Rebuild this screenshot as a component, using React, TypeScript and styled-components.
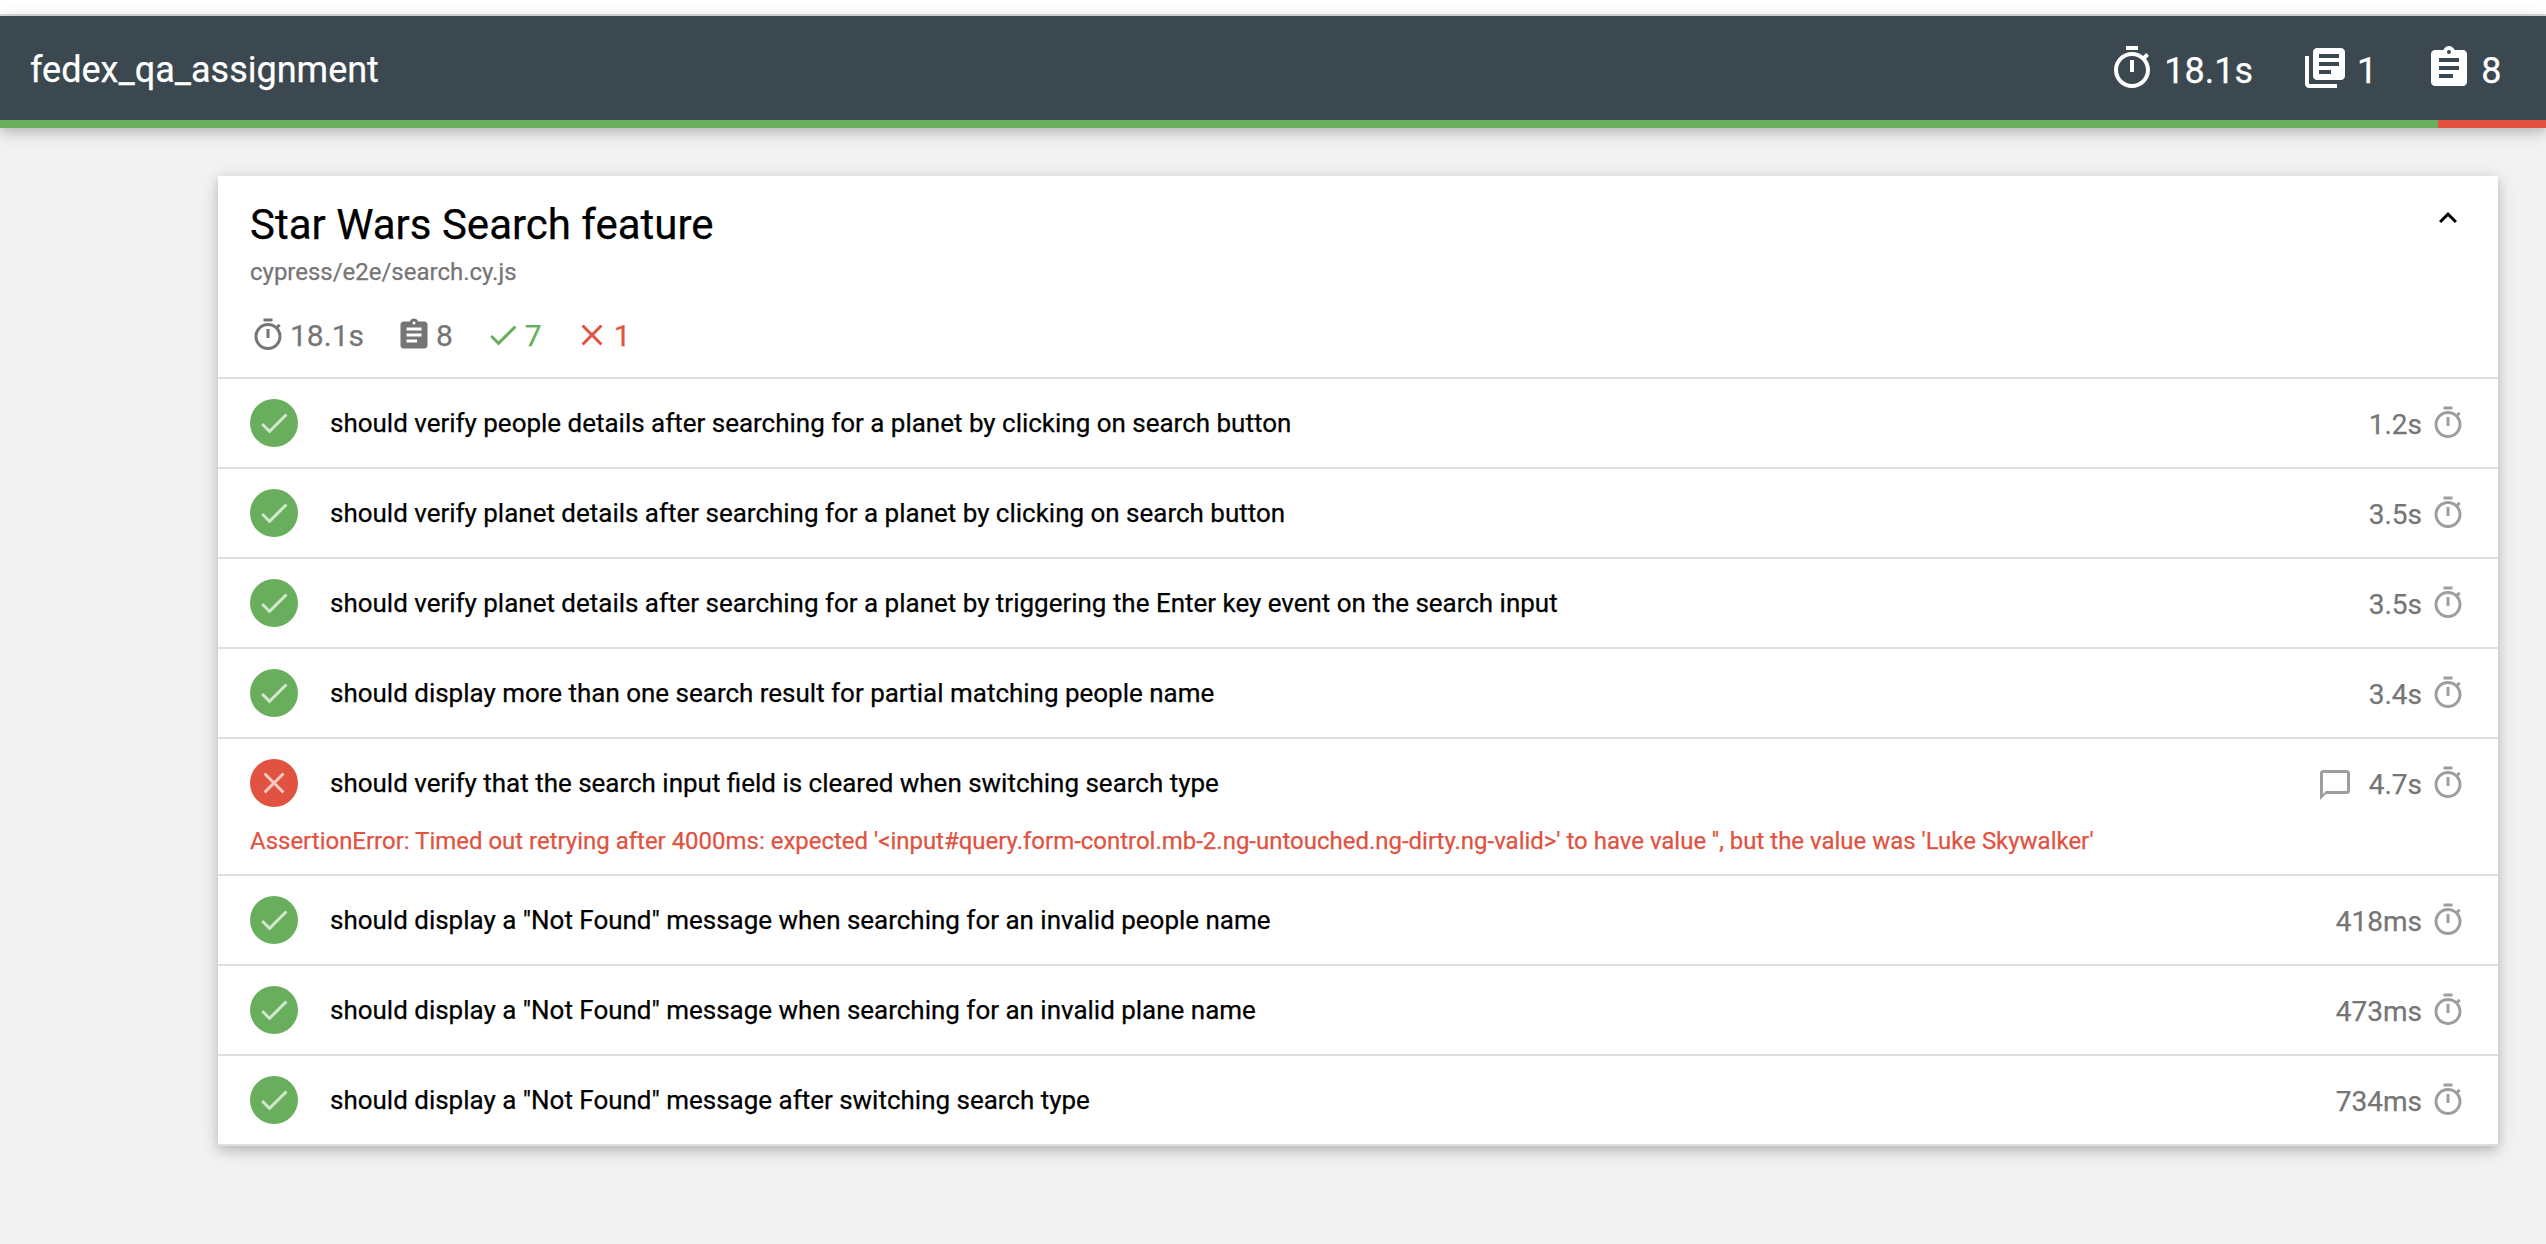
import React from "react";
import styled, { createGlobalStyle, css } from "styled-components";

const GREEN = "#68ae5d";
const RED = "#e15241";
const GREY = "#757575";

const GlobalStyle = createGlobalStyle`
  *, *::before, *::after { box-sizing: border-box; }
  html, body { margin: 0; padding: 0; }
  body {
    background: #f2f2f2;
    color: #000;
    font-family: Roboto, "Liberation Sans", sans-serif;
    -webkit-text-stroke: 0.25px currentColor;
    overflow: hidden;
  }
  h1, h2, h3, p, ul { margin: 0; padding: 0; font-weight: 400; }
`;

const paths = {
  timer:
    "M15 1H9v2h6V1zm-4 13h2V8h-2v6zm8.03-6.61l1.42-1.42c-.43-.51-.9-.99-1.41-1.41l-1.42 1.42C16.07 4.74 14.12 4 12 4c-4.97 0-9 4.03-9 9s4.02 9 9 9 9-4.03 9-9c0-2.12-.74-4.07-1.97-5.61zM12 20c-3.87 0-7-3.13-7-7s3.13-7 7-7 7 3.13 7 7-3.13 7-7 7z",
  library:
    "M4 6H2v14c0 1.1.9 2 2 2h14v-2H4V6zm16-4H8c-1.1 0-2 .9-2 2v12c0 1.1.9 2 2 2h12c1.1 0 2-.9 2-2V4c0-1.1-.9-2-2-2zm-1 9H9V9h10v2zm-4 4H9v-2h6v2zm4-8H9V5h10v2z",
  assignment:
    "M19 3h-4.18C14.4 1.84 13.3 1 12 1c-1.3 0-2.4.84-2.82 2H5c-1.1 0-2 .9-2 2v14c0 1.1.9 2 2 2h14c1.1 0 2-.9 2-2V5c0-1.1-.9-2-2-2zm-7 0c.55 0 1 .45 1 1s-.45 1-1 1-1-.45-1-1 .45-1 1-1zm2 14H7v-2h7v2zm3-4H7v-2h10v2zm0-4H7V7h10v2z",
  check: "M9 16.17L4.83 12l-1.42 1.41L9 19 21 7l-1.41-1.41z",
  close:
    "M19 6.41L17.59 5 12 10.59 6.41 5 5 6.41 10.59 12 5 17.59 6.41 19 12 13.41 17.59 19 19 17.59 13.41 12z",
  chat: "M20 2H4c-1.1 0-2 .9-2 2v18l4-4h14c1.1 0 2-.9 2-2V4c0-1.1-.9-2-2-2zm0 14H6l-2 2V4h16v12z",
  expandLess: "M12 8l-6 6 1.41 1.41L12 10.83l4.59 4.58L18 14z",
};

type IconName = keyof typeof paths;

const Svg = styled.svg<{ $size: number }>`
  display: block;
  flex: none;
  width: ${(p) => p.$size}px;
  height: ${(p) => p.$size}px;
  fill: currentColor;
`;

const Icon = ({ name, size = 36 }: { name: IconName; size?: number }) => (
  <Svg $size={size} viewBox="0 0 24 24" aria-hidden="true">
    <path d={paths[name]} />
  </Svg>
);

const elevation = css`
  box-shadow: 0 4px 10px 0 rgba(0, 0, 0, 0.16), 0 4px 20px 0 rgba(0, 0, 0, 0.12);
`;

const Page = styled.div`
  height: 1244px;
  overflow: hidden;
`;

const BrowserEdge = styled.div`
  height: 16px;
  background: #fff;
  border-bottom: 2px solid #dadde0;
`;

const Navbar = styled.header`
  ${elevation}
  background: #3b484f;
  color: #fff;
`;

const NavContent = styled.div`
  display: flex;
  justify-content: space-between;
  height: 104px;
  padding: 28px 44.5px 0 30px;
`;

const ReportTitle = styled.h1`
  font-size: 36px;
  line-height: 52px;
`;

const NavStats = styled.ul`
  display: flex;
  gap: 48px;
  list-style: none;
`;

const NavStat = styled.li`
  display: flex;
  align-items: flex-start;
  gap: 8px;
  font-size: 36px;
  line-height: 54px;
`;

const RatioBar = styled.div`
  display: flex;
  height: 8px;
`;

const RatioPart = styled.div<{ $color: string; $width?: number }>`
  flex: ${(p) => (p.$width ? `0 0 ${p.$width}px` : "1")};
  background: ${(p) => p.$color};
`;

const Suite = styled.section`
  ${elevation}
  margin: 48px 48px 0 218px;
  background: #fff;
`;

const SuiteHeader = styled.header`
  display: flex;
  justify-content: space-between;
  height: 203px;
  padding: 24px 32px 0;
  border-bottom: 2px solid #dfdfdf;
`;

const SuiteTitle = styled.h2`
  font-size: 42px;
  line-height: 50px;
`;

const SuitePath = styled.p`
  margin-top: 8px;
  color: ${GREY};
  font-size: 23.98px;
  line-height: 28px;
`;

const SuiteStats = styled.ul`
  display: flex;
  gap: 32px;
  margin-top: 31px;
  list-style: none;
`;

const SuiteStat = styled.li<{ $color: string }>`
  display: flex;
  gap: 4px;
  color: ${(p) => p.$color};
  font-size: 30px;
  line-height: 37px;
`;

const TestRow = styled.li`
  display: block;
  padding: 20px 32px;
  border-bottom: 2px solid #dfdfdf;
`;

const TestMain = styled.div`
  display: flex;
  align-items: center;
  height: 48px;
`;

const StateBadge = styled.span<{ $failed: boolean }>`
  display: flex;
  align-items: center;
  justify-content: center;
  width: 48px;
  height: 48px;
  border-radius: 50%;
  background: ${(p) => (p.$failed ? RED : GREEN)};
  color: rgba(255, 255, 255, 0.7);
`;

const TestTitle = styled.h3`
  flex: 1;
  margin-left: 32px;
  font-size: 25.97px;
  line-height: 48px;
`;

const TestMeta = styled.div`
  display: flex;
  align-items: center;
  color: #9e9e9e;
`;

const ContextMark = styled.span`
  margin: 4px 16px 0 0;
`;

const Duration = styled.span`
  margin-right: 8px;
  padding-top: 3px;
  color: ${GREY};
  font-size: 28px;
  line-height: 45px;
`;

const ErrorText = styled.p`
  margin-top: 20px;
  height: 27px;
  color: ${RED};
  font-size: 23.98px;
  line-height: 28px;
  white-space: nowrap;
`;

type Test = { title: string; time: string; error?: string };

const tests: Test[] = [
  { title: "should verify people details after searching for a planet by clicking on search button", time: "1.2s" },
  { title: "should verify planet details after searching for a planet by clicking on search button", time: "3.5s" },
  {
    title: "should verify planet details after searching for a planet by triggering the Enter key event on the search input",
    time: "3.5s",
  },
  { title: "should display more than one search result for partial matching people name", time: "3.4s" },
  {
    title: "should verify that the search input field is cleared when switching search type",
    time: "4.7s",
    error:
      "AssertionError: Timed out retrying after 4000ms: expected '<input#query.form-control.mb-2.ng-untouched.ng-dirty.ng-valid>' to have value '', but the value was 'Luke Skywalker'",
  },
  { title: 'should display a "Not Found" message when searching for an invalid people name', time: "418ms" },
  { title: 'should display a "Not Found" message when searching for an invalid plane name', time: "473ms" },
  { title: 'should display a "Not Found" message after switching search type', time: "734ms" },
];

const navStats: { icon: IconName; value: string }[] = [
  { icon: "timer", value: "18.1s" },
  { icon: "library", value: "1" },
  { icon: "assignment", value: "8" },
];

const suiteStats: { icon: IconName; value: string; color: string }[] = [
  { icon: "timer", value: "18.1s", color: GREY },
  { icon: "assignment", value: "8", color: GREY },
  { icon: "check", value: "7", color: GREEN },
  { icon: "close", value: "1", color: RED },
];

const List = styled.ul`
  list-style: none;
`;

export default function App() {
  return (
    <Page>
      <GlobalStyle />
      <BrowserEdge />
      <Navbar>
        <NavContent>
          <ReportTitle>fedex_qa_assignment</ReportTitle>
          <NavStats>
            {navStats.map((s) => (
              <NavStat key={s.icon}>
                <Icon name={s.icon} size={48} />
                <span>{s.value}</span>
              </NavStat>
            ))}
          </NavStats>
        </NavContent>
        <RatioBar>
          <RatioPart $color={GREEN} $width={2438} />
          <RatioPart $color={RED} />
        </RatioBar>
      </Navbar>
      <Suite>
        <SuiteHeader>
          <div>
            <SuiteTitle>Star Wars Search feature</SuiteTitle>
            <SuitePath>cypress/e2e/search.cy.js</SuitePath>
            <SuiteStats>
              {suiteStats.map((s) => (
                <SuiteStat key={s.icon} $color={s.color}>
                  <Icon name={s.icon} />
                  <span>{s.value}</span>
                </SuiteStat>
              ))}
            </SuiteStats>
          </div>
          <Icon name="expandLess" />
        </SuiteHeader>
        <List>
          {tests.map((t) => (
            <TestRow key={t.title}>
              <TestMain>
                <StateBadge $failed={!!t.error}>
                  <Icon name={t.error ? "close" : "check"} />
                </StateBadge>
                <TestTitle>{t.title}</TestTitle>
                <TestMeta>
                  {t.error && (
                    <ContextMark>
                      <Icon name="chat" />
                    </ContextMark>
                  )}
                  <Duration>{t.time}</Duration>
                  <Icon name="timer" />
                </TestMeta>
              </TestMain>
              {t.error && <ErrorText>{t.error}</ErrorText>}
            </TestRow>
          ))}
        </List>
      </Suite>
    </Page>
  );
}
